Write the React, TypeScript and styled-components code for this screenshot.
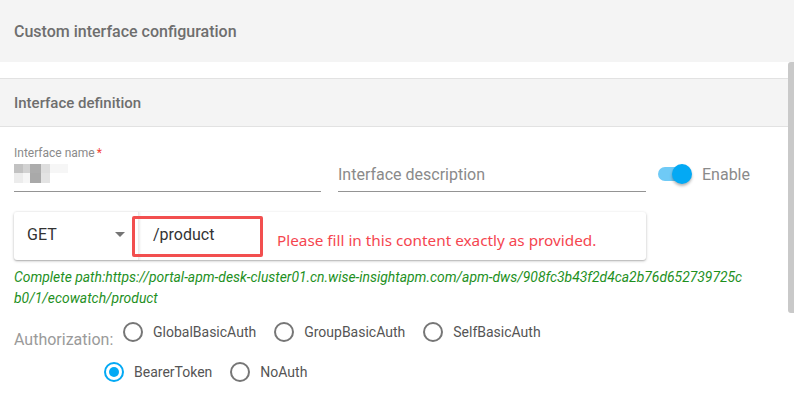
import React from "react";
import styled, { createGlobalStyle } from "styled-components";

const GlobalStyle = createGlobalStyle`
  html, body {
    margin: 0;
    padding: 0;
    background: #fff;
    font-family: Roboto, "Liberation Sans", Arial, sans-serif;
  }
  * { box-sizing: border-box; }
`;

const Page = styled.div`
  width: 794px;
  height: 393px;
  overflow: hidden;
  display: flex;
  flex-direction: column;
`;

const TopBar = styled.div`
  height: 62px;
  flex: none;
  background: #f4f4f4;
  display: flex;
  align-items: center;
  padding-left: 14px;
  font-size: 16px;
  font-weight: 500;
  color: #6e6e6e;
`;

const Body = styled.div`
  flex: 1;
  display: flex;
  min-height: 0;
`;

const Content = styled.div`
  flex: 1;
  padding-top: 16px;
`;

const ScrollTrack = styled.div`
  width: 6px;
  flex: none;
`;

const ScrollThumb = styled.div`
  height: 251px;
  background: #c9c9c9;
  border-radius: 3px 0 0 3px;
`;

const SectionHeader = styled.div`
  height: 49px;
  background: #f4f4f4;
  border-top: 1px solid #e2e2e2;
  border-bottom: 1px solid #e2e2e2;
  display: flex;
  align-items: center;
  padding-left: 14px;
  font-size: 15px;
  font-weight: 500;
  color: #6e6e6e;
`;

const Form = styled.div`
  padding: 0 14px;
`;

const FieldRow = styled.div`
  display: flex;
  align-items: flex-end;
  margin-top: 21px;
  height: 44px;
`;

const Field = styled.div<{ $width: number }>`
  width: ${(p) => p.$width}px;
  height: 44px;
  border-bottom: 1px solid #949494;
  display: flex;
  flex-direction: column;
  justify-content: flex-end;
  padding-bottom: 6px;
  margin-right: 17px;
`;

const FieldLabel = styled.div`
  font-size: 12px;
  color: #8a8a8a;
  line-height: 14px;
  margin-bottom: 4px;
  span { color: #f44336; margin-left: 2px; }
`;

const Placeholder = styled.div`
  font-size: 16px;
  color: #8a8a8a;
  line-height: 20px;
`;

const Mosaic = styled.div`
  display: grid;
  grid-template-columns: 9px 7px 11px 9px 18px;
  grid-template-rows: 9px 10px;
  height: 19px;
  margin-bottom: 2px;
`;

const Cell = styled.div<{ $c: string }>`
  background: ${(p) => p.$c};
`;

const ToggleWrap = styled.div`
  display: flex;
  align-items: center;
  align-self: center;
  margin-top: 8px;
  margin-left: -5px;
`;

const Track = styled.div`
  width: 32px;
  height: 14px;
  border-radius: 7px;
  background: #6fcaf6;
  display: flex;
  align-items: center;
  justify-content: flex-end;
`;

const Thumb = styled.div`
  width: 20px;
  height: 20px;
  border-radius: 50%;
  background: #03a9f4;
  margin-right: -2px;
  box-shadow: 0 2px 3px rgba(0, 0, 0, 0.3);
`;

const ToggleText = styled.span`
  margin-left: 12px;
  font-size: 16px;
  color: #8a8a8a;
`;

const RequestCard = styled.div`
  margin-top: 20px;
  width: 632px;
  height: 48px;
  display: flex;
  box-shadow: 0 1px 3px rgba(0, 0, 0, 0.25), 0 1px 1px rgba(0, 0, 0, 0.1);
  border-radius: 3px;
  background: #fff;
`;

const MethodSelect = styled.div`
  width: 125px;
  display: flex;
  align-items: center;
  justify-content: space-between;
  padding: 0 13px 3px 13px;
  font-size: 16px;
  color: #333;
  border-right: 1px solid #ececec;
  box-shadow: 1px 0 2px rgba(0, 0, 0, 0.08);
`;

const Caret = styled.div`
  width: 0;
  height: 0;
  border-left: 5px solid transparent;
  border-right: 5px solid transparent;
  border-top: 5px solid #757575;
`;

const UrlPart = styled.div`
  flex: 1;
  display: flex;
  align-items: center;
  margin-left: -7px;
`;

const Highlight = styled.div`
  width: 131px;
  height: 41px;
  margin-top: 4px;
  align-self: flex-start;
  border: 3px solid #f24f4f;
  border-radius: 2px;
  display: flex;
  align-items: center;
  padding-left: 18px;
  padding-bottom: 5px;
  font-size: 16px;
  color: #333;
`;

const Note = styled.span`
  margin-left: 14px;
  margin-top: 8px;
  font-family: "Noto Sans", "Open Sans", sans-serif;
  font-size: 15.3px;
  color: #f5454f;
`;

const PathText = styled.div`
  margin-top: 7px;
  width: 760px;
  font-size: 13.9px;
  line-height: 21px;
  font-style: italic;
  color: #1e901e;
  word-break: break-all;
`;

const AuthBlock = styled.div`
  margin-top: 13px;
  display: flex;
  align-items: flex-start;
`;

const AuthLabel = styled.div`
  font-size: 16px;
  color: #9a9a9a;
  margin-top: 8px;
  width: 113px;
  flex: none;
`;

const RadioGrid = styled.div`
  display: flex;
  flex-wrap: wrap;
  width: 460px;
  row-gap: 20px;
  margin-left: -4px;
`;

const RadioLine = styled.div<{ $indent: number }>`
  display: flex;
  width: 100%;
  margin-left: ${(p) => p.$indent}px;
`;

const RadioItem = styled.label`
  display: flex;
  align-items: center;
  margin-right: 18px;
  font-size: 14px;
  color: #555;
`;

const RadioCircle = styled.span<{ $on?: boolean }>`
  width: 20px;
  height: 20px;
  border-radius: 50%;
  border: 2px solid ${(p) => (p.$on ? "#03a9f4" : "#767676")};
  display: flex;
  align-items: center;
  justify-content: center;
  margin-right: 10px;
  &::after {
    content: "";
    width: 10px;
    height: 10px;
    border-radius: 50%;
    background: ${(p) => (p.$on ? "#03a9f4" : "transparent")};
  }
`;

const mosaic = [
  "#c2c2c2", "#d2d2d2", "#acacac", "#dedede", "#f6f6f6",
  "#ececec", "#f6f6f6", "#a9a9a9", "#e3e3e3", "#ffffff",
];

const Radio = ({ label, on }: { label: string; on?: boolean }) => (
  <RadioItem>
    <RadioCircle $on={on} />
    {label}
  </RadioItem>
);

const App = (): JSX.Element => {
  return (
    <Page>
      <GlobalStyle />
      <TopBar>Custom interface configuration</TopBar>
      <Body>
        <Content>
          <SectionHeader>Interface definition</SectionHeader>
          <Form>
            <FieldRow>
              <Field $width={307}>
                <FieldLabel>
                  Interface name<span>*</span>
                </FieldLabel>
                <Mosaic>
                  {mosaic.map((c, i) => (
                    <Cell key={i} $c={c} />
                  ))}
                </Mosaic>
              </Field>
              <Field $width={308}>
                <Placeholder>Interface description</Placeholder>
              </Field>
              <ToggleWrap>
                <Track>
                  <Thumb />
                </Track>
                <ToggleText>Enable</ToggleText>
              </ToggleWrap>
            </FieldRow>

            <RequestCard>
              <MethodSelect>
                GET
                <Caret />
              </MethodSelect>
              <UrlPart>
                <Highlight>/product</Highlight>
                <Note>Please fill in this content exactly as provided.</Note>
              </UrlPart>
            </RequestCard>

            <PathText>
              Complete path:https://portal-apm-desk-cluster01.cn.wise-insightapm.com/apm-dws/908fc3b43f2d4ca2b76d652739725c
              <br />
              b0/1/ecowatch/product
            </PathText>

            <AuthBlock>
              <AuthLabel>Authorization:</AuthLabel>
              <RadioGrid>
                <RadioLine $indent={0}>
                  <Radio label="GlobalBasicAuth" />
                  <Radio label="GroupBasicAuth" />
                  <Radio label="SelfBasicAuth" />
                </RadioLine>
                <RadioLine $indent={-19}>
                  <Radio label="BearerToken" on />
                  <Radio label="NoAuth" />
                </RadioLine>
              </RadioGrid>
            </AuthBlock>
          </Form>
        </Content>
        <ScrollTrack>
          <ScrollThumb />
        </ScrollTrack>
      </Body>
    </Page>
  );
};

export default App;
